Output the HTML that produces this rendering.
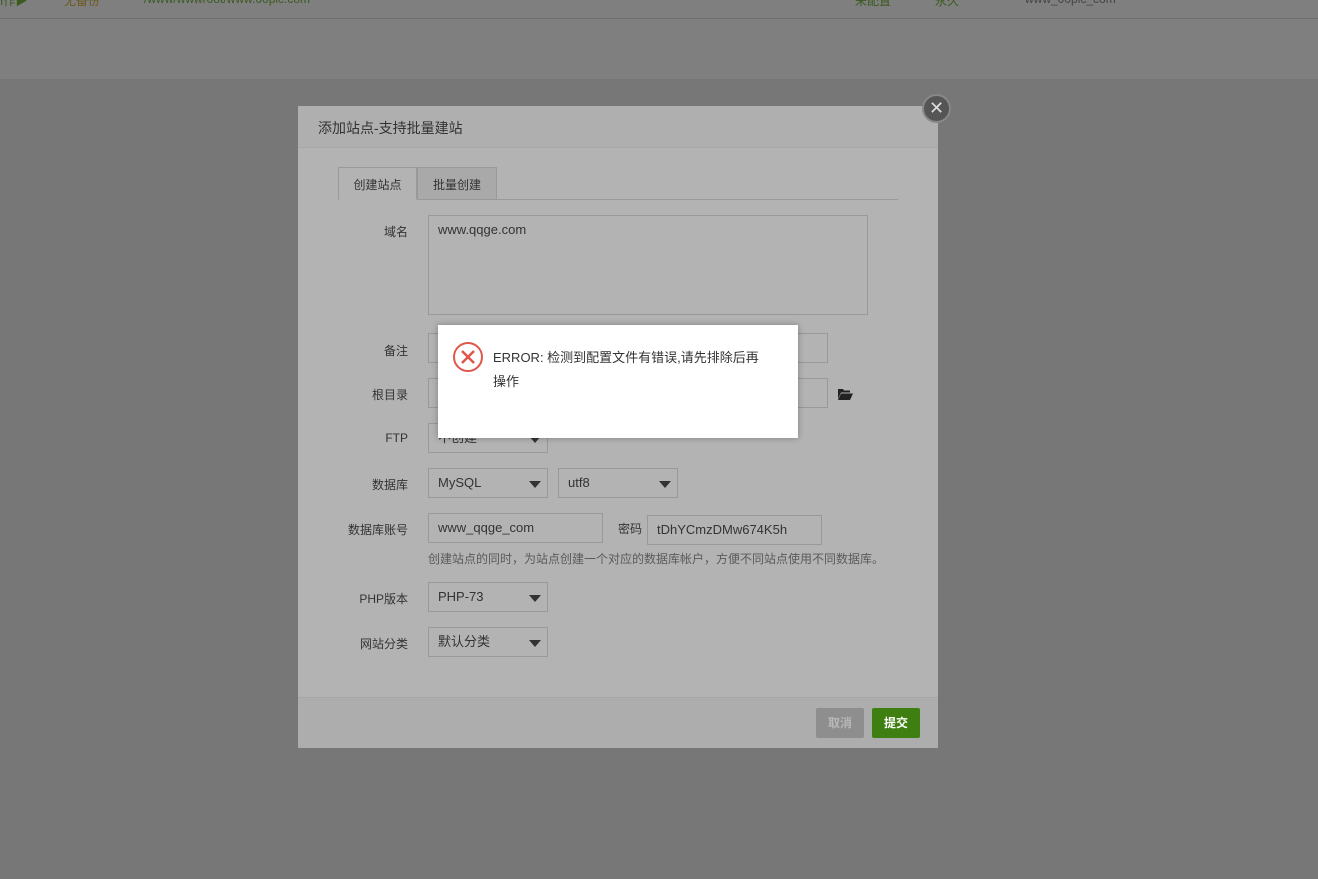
<!DOCTYPE html>
<html><head><meta charset="utf-8"><style>
*{margin:0;padding:0;box-sizing:border-box}
body{width:1318px;height:879px;background:#777;position:relative;overflow:hidden;font-family:"Liberation Sans","Noto Sans CJK SC",sans-serif;font-size:13px;color:#333}
.a{position:absolute}
.top{left:0;top:0;width:1318px;height:79px;background:#7f7f7f}
.line{left:0;top:18px;width:1318px;height:1px;background:#6e6e6e}
.dlg{left:298px;top:106px;width:640px;height:642px;background:#b3b3b3}
.hd{left:0;top:0;width:640px;height:42px;background:#afafaf;border-bottom:1px solid #a8a8a8;font-size:14px;padding:12px 0 0 20px;color:#333}
.ft{left:0;top:591px;width:640px;height:51px;background:#adadad;border-top:1px solid #a6a6a6}
.lbl{width:110px;text-align:right;color:#333;font-size:12px}
.in{border:1px solid #999;background:#b3b3b3;padding:0 9px;line-height:28px;height:30px;color:#333}
.sel::after{content:"";position:absolute;right:6px;top:12px;border-left:6px solid transparent;border-right:6px solid transparent;border-top:7px solid #333}
.btn{height:30px;line-height:30px;width:48px;text-align:center;color:#fff;font-size:12px;border-radius:2px;font-weight:bold}
</style></head><body>
<div class="a top"></div><div class="a line"></div>
<div class="a" style="left:0;top:-8px;color:#3a5a1e;font-size:12px;width:1318px">
<span class="a" style="left:0">I作▶</span><span class="a" style="left:64px;color:#6a5a1a">无备份</span><span class="a" style="left:144px">/www/wwwroot/www.00plc.com</span><span class="a" style="left:855px">未配置</span><span class="a" style="left:935px">永久</span><span class="a" style="left:1025px;color:#444">www_00plc_com</span></div>
<div class="a dlg">
<div class="a hd">添加站点-支持批量建站</div>
<div class="a" style="left:40px;top:61px;width:560px;height:33px;border-bottom:1px solid #999"></div>
<div class="a" style="left:40px;top:61px;width:79px;height:33px;border:1px solid #999;border-bottom:1px solid #b3b3b3;text-align:center;line-height:34px;font-size:12px">创建站点</div>
<div class="a" style="left:119px;top:61px;width:80px;height:33px;border:1px solid #999;background:#a9a9a9;text-align:center;line-height:34px;font-size:12px">批量创建</div>
<div class="a lbl" style="left:0;top:117px">域名</div>
<div class="a in" style="left:130px;top:109px;width:440px;height:100px;line-height:28px">www.qqge.com</div>
<div class="a lbl" style="left:0;top:236px">备注</div>
<div class="a in" style="left:130px;top:227px;width:400px"></div>
<div class="a lbl" style="left:0;top:280px">根目录</div>
<div class="a in" style="left:130px;top:272px;width:400px"></div>
<svg class="a" style="left:540px;top:282px" width="15" height="12"><path d="M0 1h5l1 1.5h6v2H3L0 11z M3 5.5h12L12 12H0z" fill="#222"/></svg>
<div class="a lbl" style="left:0;top:325px">FTP</div>
<div class="a in sel" style="left:130px;top:317px;width:120px">不创建</div>
<div class="a lbl" style="left:0;top:370px">数据库</div>
<div class="a in sel" style="left:130px;top:362px;width:120px">MySQL</div>
<div class="a in sel" style="left:260px;top:362px;width:120px">utf8</div>
<div class="a lbl" style="left:0;top:415px">数据库账号</div>
<div class="a in" style="left:130px;top:407px;width:175px">www_qqge_com</div>
<div class="a" style="left:320px;top:414px;font-size:12px">密码</div>
<div class="a in" style="left:349px;top:409px;width:175px">tDhYCmzDMw674K5h</div>
<div class="a" style="left:130px;top:444px;font-size:12px;color:#5a5a5a">创建站点的同时，为站点创建一个对应的数据库帐户，方便不同站点使用不同数据库。</div>
<div class="a lbl" style="left:0;top:484px">PHP版本</div>
<div class="a in sel" style="left:130px;top:476px;width:120px">PHP-73</div>
<div class="a lbl" style="left:0;top:529px">网站分类</div>
<div class="a in sel" style="left:130px;top:521px;width:120px">默认分类</div>
<div class="a ft"></div>
<div class="a btn" style="left:518px;top:602px;background:#8e8e8e;color:#b8b8b8">取消</div>
<div class="a btn" style="left:574px;top:602px;background:#3f7f12">提交</div>
</div>
<div class="a" style="left:922px;top:94px;width:29px;height:29px;border-radius:50%;background:#555;border:2px solid #888;color:#ddd;text-align:center;line-height:24px;font-size:18px">✕</div>
<div class="a" style="left:438px;top:325px;width:360px;height:113px;background:#fff;box-shadow:0 0 6px rgba(0,0,0,.3)"></div>
<svg class="a" style="left:452px;top:341px" width="32" height="32"><circle cx="16" cy="16" r="14" fill="none" stroke="#e0564a" stroke-width="2"/><path d="M10 10L22 22M22 10L10 22" stroke="#e0564a" stroke-width="2.5"/></svg>
<div class="a" style="left:493px;top:346px;width:285px;font-size:13px;line-height:24px;color:#333">ERROR: 检测到配置文件有错误,请先排除后再<br>操作</div>
</body></html>
